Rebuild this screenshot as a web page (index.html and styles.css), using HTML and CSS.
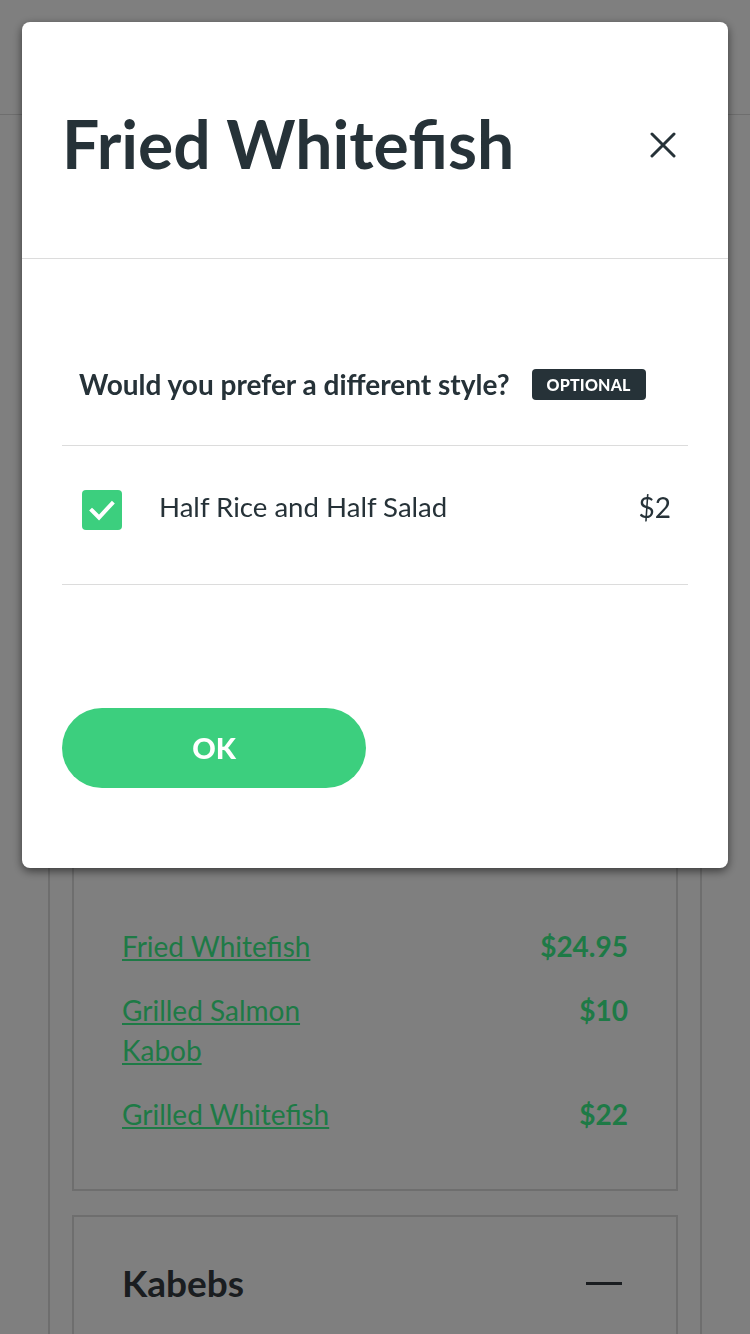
FILE: index.html
```html
<!DOCTYPE html>
<html lang="en">
<head>
<meta charset="utf-8">
<title>Fried Whitefish</title>
<link rel="stylesheet" href="styles.css">
</head>
<body>
<div class="page">
  <header class="topbar"></header>
  <main class="menu">
    <section class="category">
      <div class="category-head">
        <h2 class="category-title">Fish</h2>
        <span class="minus"></span>
      </div>
      <ul class="items">
        <li class="item"><a class="item-name" href="#">Fried Whitefish</a><span class="item-price">$24.95</span></li>
        <li class="item"><a class="item-name" href="#">Grilled Salmon Kabob</a><span class="item-price">$10</span></li>
        <li class="item"><a class="item-name" href="#">Grilled Whitefish</a><span class="item-price">$22</span></li>
      </ul>
    </section>
    <section class="category">
      <div class="category-head">
        <h2 class="category-title">Kabebs</h2>
        <span class="minus"></span>
      </div>
    </section>
  </main>
</div>

<div class="overlay"></div>

<div class="modal" role="dialog">
  <div class="modal-header">
    <h1 class="modal-title">Fried Whitefish</h1>
    <button class="close" aria-label="Close">
      <svg width="26" height="26" viewBox="0 0 26 26"><path d="M2 2 L24 24 M24 2 L2 24" stroke="#263238" stroke-width="3" stroke-linecap="round" fill="none"/></svg>
    </button>
  </div>
  <div class="modal-body">
    <div class="question">
      <span class="question-text">Would you prefer a different style?</span>
      <span class="badge">Optional</span>
    </div>
    <label class="option">
      <span class="checkbox">
        <svg width="30" height="30" viewBox="0 0 30 30"><path d="M5 15.5 L12 22.5 L25 8.5" stroke="#fff" stroke-width="4" fill="none" stroke-linecap="square"/></svg>
      </span>
      <span class="option-name">Half Rice and Half Salad</span>
      <span class="option-price">$2</span>
    </label>
    <button class="ok">OK</button>
  </div>
</div>
</body>
</html>
```

FILE: styles.css
```css
* { box-sizing: border-box; }
html, body { margin: 0; padding: 0; }
body {
  font-family: "Lato", "Liberation Sans", sans-serif;
  background: #fff;
  width: 750px;
  height: 1334px;
  overflow: hidden;
}
.page { width: 750px; }
.topbar {
  height: 115px;
  border-bottom: 1px solid #dcdcdc;
}
.menu {
  margin-left: 48px;
  width: 654px;
  border-left: 2px solid #dcdcdc;
  border-right: 2px solid #dcdcdc;
  padding: 24px 22px 0;
  min-height: 1300px;
}
.category {
  border: 2px solid #dcdcdc;
  padding: 42px 48px 55px;
  margin-bottom: 24px;
}
.category-head {
  display: flex;
  align-items: center;
  justify-content: space-between;
}
.category-title {
  margin: 0;
  font-size: 37px;
  line-height: 48px;
  font-weight: 700;
  color: #343a40;
}
.minus {
  width: 36px;
  height: 3px;
  background: #343a40;
  margin-right: 6px;
}
.items {
  list-style: none;
  margin: 695px 0 0;
  padding: 0;
}
.item {
  display: flex;
  justify-content: space-between;
  align-items: flex-start;
  font-size: 28px;
  line-height: 40px;
  margin-bottom: 24px;
}
.item:last-child { margin-bottom: 0; }
.item-name {
  max-width: 50%;
  color: #3cf48c;
  text-decoration: underline;
}
.item-price {
  font-weight: 700;
  color: #3cf48c;
}

.overlay {
  position: fixed;
  inset: 0;
  background: rgba(0, 0, 0, 0.5);
}

.modal {
  position: fixed;
  left: 22px;
  top: 22px;
  width: 706px;
  background: #fff;
  border-radius: 8px;
  box-shadow: 0 3px 10px rgba(0, 0, 0, 0.55);
  color: #263238;
}
.modal-header {
  height: 237px;
  border-bottom: 1px solid #dcdcdc;
  padding: 8px 40px 0 40px;
  display: flex;
  align-items: center;
  justify-content: space-between;
}
.modal-title {
  margin: 0;
  font-size: 66px;
  font-weight: 700;
  line-height: 80px;
  color: #263238;
}
.close {
  border: 0;
  background: none;
  padding: 0;
  width: 26px;
  height: 26px;
  margin-right: 12px;
  margin-top: 2px;
  display: flex;
}
.modal-body {
  padding: 0 40px 80px;
}
.question {
  display: flex;
  align-items: center;
  gap: 22px;
  padding: 105px 16px 41px 17px;
  border-bottom: 1px solid #dcdcdc;
}
.question-text {
  font-size: 28px;
  font-weight: 700;
  line-height: 40px;
}
.badge {
  background: #263238;
  color: #fff;
  font-size: 16px;
  font-weight: 900;
  letter-spacing: 0.2px;
  text-transform: uppercase;
  border-radius: 4px;
  height: 31px;
  line-height: 31px;
  padding: 0 15px;
}
.option {
  display: flex;
  align-items: center;
  height: 139px;
  padding: 0 17px 10px 20px;
  border-bottom: 1px solid #dcdcdc;
}
.checkbox {
  width: 40px;
  height: 40px;
  border-radius: 4px;
  background: #3ccf7e;
  display: flex;
  align-items: center;
  justify-content: center;
  flex: none;
}
.option-name {
  margin-left: 37px;
  font-size: 27.6px;
  line-height: 40px;
  padding-bottom: 6px;
  flex: 1;
}
.option-price {
  font-size: 28px;
  line-height: 40px;
  padding-bottom: 6px;
}
.ok {
  margin-top: 123px;
  display: block;
  width: 304px;
  height: 80px;
  border: 0;
  border-radius: 40px;
  background: #3ccf7e;
  color: #fff;
  font-family: "Lato", "Liberation Sans", sans-serif;
  font-size: 29px;
  font-weight: 900;
  padding-bottom: 2px;
}
```
